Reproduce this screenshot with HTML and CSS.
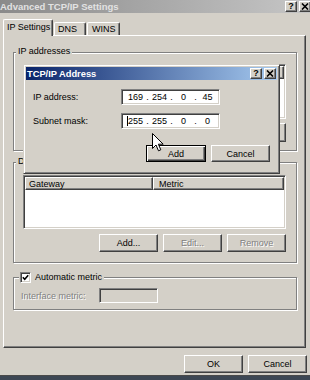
FILE: index.html
```html
<!DOCTYPE html>
<html>
<head>
<meta charset="utf-8">
<title>Advanced TCP/IP Settings</title>
<link rel="stylesheet" href="styles.css">
</head>
<body>
<div class="win">
  <div class="titlebar">
    <span class="title">Advanced TCP/IP Settings</span>
    <div class="tbtns">
      <span class="tbtn q">?</span>
      <span class="tbtn"><svg width="8" height="7" viewBox="0 0 8 7"><path d="M1 0.5L7 6.5M7 0.5L1 6.5" stroke="#000" stroke-width="1.6"/></svg></span>
    </div>
  </div>
  <div class="client">
    <div class="tabs">
      <div class="tab sel">IP Settings</div>
      <div class="tab t-dns">DNS</div>
      <div class="tab t-wins">WINS</div>
    </div>
    <div class="panel">
      <div class="group g-ip">
        <span class="legend">IP addresses</span>
        <div class="lv ip-lv">
          <div class="lvh"><span class="col c1"></span><span class="col c2"></span></div>
        </div>
        <div class="btnrow">
          <button class="btn"></button>
          <button class="btn dis"></button>
          <button class="btn dis"></button>
        </div>
      </div>
      <div class="group g-gw">
        <span class="legend">D</span>
        <div class="lv gw-lv">
          <div class="lvh"><span class="col c1">Gateway</span><span class="col c2">Metric</span></div>
        </div>
        <div class="btnrow">
          <button class="btn">Add...</button>
          <button class="btn dis">Edit...</button>
          <button class="btn dis">Remove</button>
        </div>
      </div>
      <div class="group g-met">
        <span class="legend chk">
          <span class="cbox"><svg width="7" height="7" viewBox="0 0 7 7"><path d="M0.8 3.2L2.7 5.2L6.2 1.2" stroke="#000" stroke-width="1.6" fill="none"/></svg></span>
          <span>Automatic metric</span>
        </span>
        <div class="irow">
          <span class="ilabel dtext">Interface metric:</span>
          <span class="ifield"></span>
        </div>
      </div>
    </div>
    <div class="footer">
      <button class="btn">OK</button>
      <button class="btn">Cancel</button>
    </div>
  </div>
</div>

<div class="dlg">
  <div class="dtitle">
    <span class="dtt">TCP/IP Address</span>
    <div class="dbtns">
      <span class="tbtn q">?</span>
      <span class="tbtn"><svg width="8" height="7" viewBox="0 0 8 7"><path d="M1 0.5L7 6.5M7 0.5L1 6.5" stroke="#000" stroke-width="1.6"/></svg></span>
    </div>
  </div>
  <div class="dbody">
    <div class="frow">
      <span class="flabel">IP address:</span>
      <span class="ipf"><span class="seg">169</span><span class="dot">.</span><span class="seg">254</span><span class="dot">.</span><span class="seg">0</span><span class="dot">.</span><span class="seg">45</span></span>
    </div>
    <div class="frow">
      <span class="flabel">Subnet mask:</span>
      <span class="ipf"><span class="seg first"><i class="caret"></i>255</span><span class="dot">.</span><span class="seg">255</span><span class="dot">.</span><span class="seg">0</span><span class="dot">.</span><span class="seg">0</span></span>
    </div>
    <div class="dbtnrow">
      <button class="btn def">Add</button>
      <button class="btn">Cancel</button>
    </div>
  </div>
</div>

<svg class="cursor" width="13" height="19" viewBox="0 0 13 19"><path d="M0.5 0.5L0.5 15.5L4 12L6.5 17.8L8.8 16.8L6.4 11.2L11.2 11.2Z" fill="#fff" stroke="#000" stroke-width="1" stroke-linejoin="round"/></svg>
</body>
</html>
```
FILE: styles.css
```css
* { box-sizing: border-box; }
html, body { margin: 0; padding: 0; }
body {
  width: 310px;
  height: 380px;
  overflow: hidden;
  background: #3d4754;
  font-family: "Liberation Sans", Arial, sans-serif;
  font-size: 9px;
  color: #000;
  position: relative;
}
.win {
  width: 310px;
  height: 376px;
  background: #d4d0c8;
  border-bottom: 1px solid #4a4a4a;
}
.titlebar {
  height: 13px;
  display: flex;
  align-items: center;
  justify-content: space-between;
  background: linear-gradient(to right, #8a8a8a, #c6c6c6);
}
.title {
  margin-left: 0;
  font-weight: bold;
  font-size: 9.5px;
  color: #e2e2e2;
  white-space: nowrap;
}
.tbtns { display: flex; gap: 2px; margin-right: -1px; }
.tbtn {
  width: 12px;
  height: 11px;
  background: #d4d0c8;
  border: 1px solid;
  border-color: #fff #404040 #404040 #fff;
  box-shadow: inset -1px -1px 0 #808080;
  display: flex;
  align-items: center;
  justify-content: center;
  font-weight: bold;
  font-size: 9px;
  line-height: 9px;
}
.client { padding: 6px 4px 0 3px; }
.tabs {
  display: flex;
  align-items: flex-end;
  height: 16px;
  position: relative;
  z-index: 1;
}
.tab {
  height: 13px;
  background: #d4d0c8;
  border: 1px solid;
  border-color: #fff #404040 transparent #fff;
  border-bottom: 0;
  border-radius: 2px 2px 0 0;
  box-shadow: inset -1px 0 0 #808080;
  display: flex;
  align-items: center;
  padding-left: 3px;
  white-space: nowrap;
}
.tab.sel { width: 50px; height: 17px; margin-bottom: -1px; padding-left: 3px; padding-bottom: 2px; }
.t-dns { width: 32px; margin-left: 1px; padding-left: 3px; }
.t-wins { width: 33px; margin-left: 1px; padding-left: 4px; }
.panel {
  height: 313px;
  border: 1px solid;
  border-color: #fff #404040 #404040 #fff;
  box-shadow: inset -1px -1px 0 #808080;
  padding: 16px 8px 0 9px;
}
.group {
  position: relative;
  border: 1px solid #808080;
  box-shadow: 1px 1px 0 #fff, inset 1px 1px 0 #fff;
}
.legend {
  position: absolute;
  top: -7px;
  left: 2px;
  line-height: 11px;
  padding: 0 2px;
  background: #d4d0c8;
  white-space: nowrap;
}
.g-ip { height: 99px; padding: 11px 10px 0 9px; }
.g-gw { height: 101px; margin-top: 11px; padding: 12px 10px 0 9px; }
.g-met { height: 33px; margin-top: 14px; padding: 10px 10px 0 7px; }
.lv {
  background: #fff;
  border: 1px solid;
  border-color: #808080 #fff #fff #808080;
  box-shadow: inset 1px 1px 0 #404040, inset -1px -1px 0 #d4d0c8;
  padding: 1px;
}
.ip-lv { height: 55px; }
.gw-lv { height: 54px; }
.lvh { display: flex; height: 13px; }
.col {
  background: #d4d0c8;
  border: 1px solid;
  border-color: #fff #404040 #404040 #fff;
  box-shadow: inset -1px -1px 0 #808080;
  display: flex;
  align-items: center;
  padding-left: 3px;
  white-space: nowrap;
}
.c1 { width: 128px; }
.c2 { flex: 1; padding-left: 5px; }
.btnrow { display: flex; justify-content: flex-end; gap: 5px; }
.g-ip .btnrow { margin-top: 4px; }
.g-ip .btnrow .btn { height: 19px; }
.g-gw .btnrow { margin-top: 5px; }
.btn {
  width: 59px;
  height: 18px;
  padding: 0;
  margin: 0;
  font-family: inherit;
  font-size: 9px;
  color: #000;
  background: #d4d0c8;
  border: 1px solid;
  border-color: #fff #404040 #404040 #fff;
  box-shadow: inset -1px -1px 0 #808080;
  border-radius: 0;
  display: flex;
  align-items: center;
  justify-content: center;
}
.btn.dis, .dtext { color: #808080; text-shadow: 1px 1px 0 #fff; }
.btn.def {
  width: 60px;
  height: 17px;
  border-color: #000;
  box-shadow: inset 1px 1px 0 #fff, inset -1px -1px 0 #404040, inset -2px -2px 0 #808080;
}
.legend.chk {
  top: -6px;
  left: 5px;
  padding: 0 2px 0 1px;
  display: flex;
  align-items: center;
  gap: 4px;
}
.cbox {
  width: 11px;
  height: 11px;
  background: #fff;
  border: 1px solid;
  border-color: #808080 #fff #fff #808080;
  box-shadow: inset 1px 1px 0 #404040, inset -1px -1px 0 #d4d0c8;
  display: flex;
  align-items: center;
  justify-content: center;
}
.irow { display: flex; align-items: center; }
.ilabel { width: 78px; white-space: nowrap; }
.ifield {
  width: 59px;
  height: 15px;
  background: #d4d0c8;
  border: 1px solid;
  border-color: #808080 #fff #fff #808080;
  box-shadow: inset 1px 1px 0 #404040, inset -1px -1px 0 #d4d0c8;
}
.footer {
  display: flex;
  justify-content: flex-end;
  gap: 5px;
  margin-top: 7px;
  margin-right: -1px;
}
.dlg {
  position: absolute;
  left: 23px;
  top: 64px;
  width: 257px;
  height: 110px;
  background: #d4d0c8;
  border: 1px solid;
  border-color: #d4d0c8 #404040 #404040 #d4d0c8;
  box-shadow: inset 1px 1px 0 #fff, inset -1px -1px 0 #808080;
  padding: 2px;
}
.dtitle {
  height: 13px;
  display: flex;
  align-items: center;
  justify-content: space-between;
  background: linear-gradient(to right, #0a246a, #a6caf0);
  padding: 0 1px 0 1px;
}
.dtt { color: #fff; font-weight: bold; font-size: 9.3px; white-space: nowrap; }
.dbtns { display: flex; gap: 2px; }
.dbtns .tbtn { height: 11px; }
.dbody { padding: 9px 7px 0 7px; }
.frow { display: flex; align-items: center; height: 16px; }
.frow + .frow { margin-top: 8px; }
.flabel { width: 88px; white-space: nowrap; }
.ipf {
  width: 99px;
  height: 16px;
  background: #fff;
  border: 1px solid;
  border-color: #808080 #fff #fff #808080;
  box-shadow: inset 1px 1px 0 #404040, inset -1px -1px 0 #d4d0c8;
  display: flex;
  align-items: center;
  padding-left: 4px;
}
.seg { width: 19px; text-align: center; position: relative; }
.dot { width: 5px; text-align: center; }
.caret {
  position: absolute;
  left: 1px;
  top: 0;
  width: 1px;
  height: 10px;
  background: #000;
}
.dbtnrow { display: flex; justify-content: flex-end; gap: 5px; margin-top: 16px; }
.dbtnrow .btn { height: 17px; }
.cursor { position: absolute; left: 152px; top: 133px; }
```
